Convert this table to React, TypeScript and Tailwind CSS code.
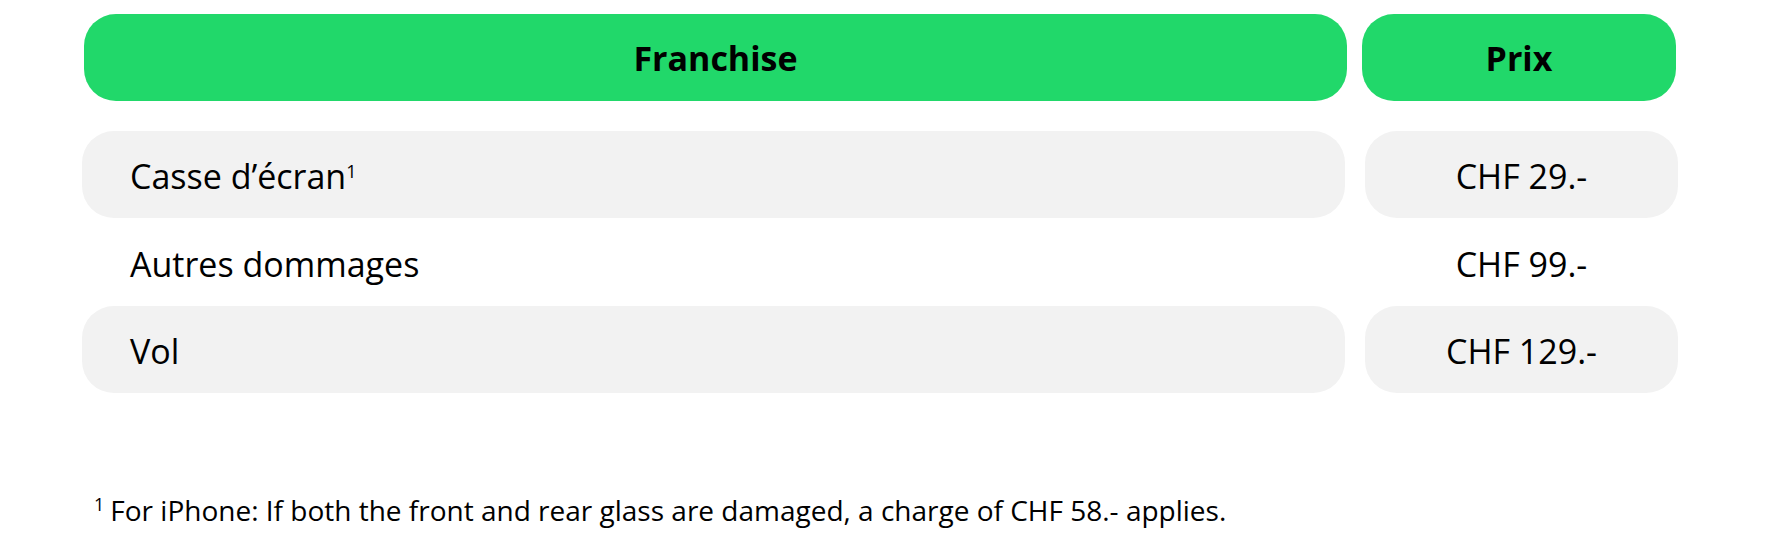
import React from "react";

const rows = [
  { label: "Casse d’écran", sup: true, price: "CHF 29.-", bg: true, h: "h-[87px]" },
  { label: "Autres dommages", sup: false, price: "CHF 99.-", bg: false, h: "h-[88px]" },
  { label: "Vol", sup: false, price: "CHF 129.-", bg: true, h: "h-[87px]" },
];

export default function App() {
  return (
    <div
      className="w-[1780px] h-[540px] bg-white text-black overflow-hidden pl-[82px] pt-[14px]"
      style={{ fontFamily: '"Open Sans", "Noto Sans", sans-serif' }}
    >
      <div className="flex">
        <div className="ml-[2px] w-[1263px] h-[87px] rounded-[32px] bg-[#21d86a] flex items-center justify-center text-[34px] font-bold leading-none">
          Franchise
        </div>
        <div className="ml-[15px] w-[314px] h-[87px] rounded-[32px] bg-[#21d86a] flex items-center justify-center text-[34px] font-bold leading-none">
          Prix
        </div>
      </div>
      <div className="mt-[30px] flex flex-col">
        {rows.map((r) => (
          <div key={r.label} className={`flex ${r.h}`}>
            <div
              className={`w-[1263px] h-full rounded-[32px] flex items-center pl-[48px] pt-[3px] text-[34px] leading-none ${
                r.bg ? "bg-[#f2f2f2]" : ""
              }`}
            >
              <span>
                {r.label}
                {r.sup && <sup className="text-[18px] -top-[11px]">1</sup>}
              </span>
            </div>
            <div
              className={`ml-[20px] w-[313px] h-full rounded-[32px] flex items-center justify-center pt-[3px] text-[34px] leading-none ${
                r.bg ? "bg-[#f2f2f2]" : ""
              }`}
            >
              {r.price}
            </div>
          </div>
        ))}
      </div>
      <div className="mt-[103px] pl-[12px] text-[28px] leading-none">
        <sup className="text-[18px] -top-[10px] mr-[6px]">1</sup>
        For iPhone: If both the front and rear glass are damaged, a charge of CHF 58.- applies.
      </div>
    </div>
  );
}
